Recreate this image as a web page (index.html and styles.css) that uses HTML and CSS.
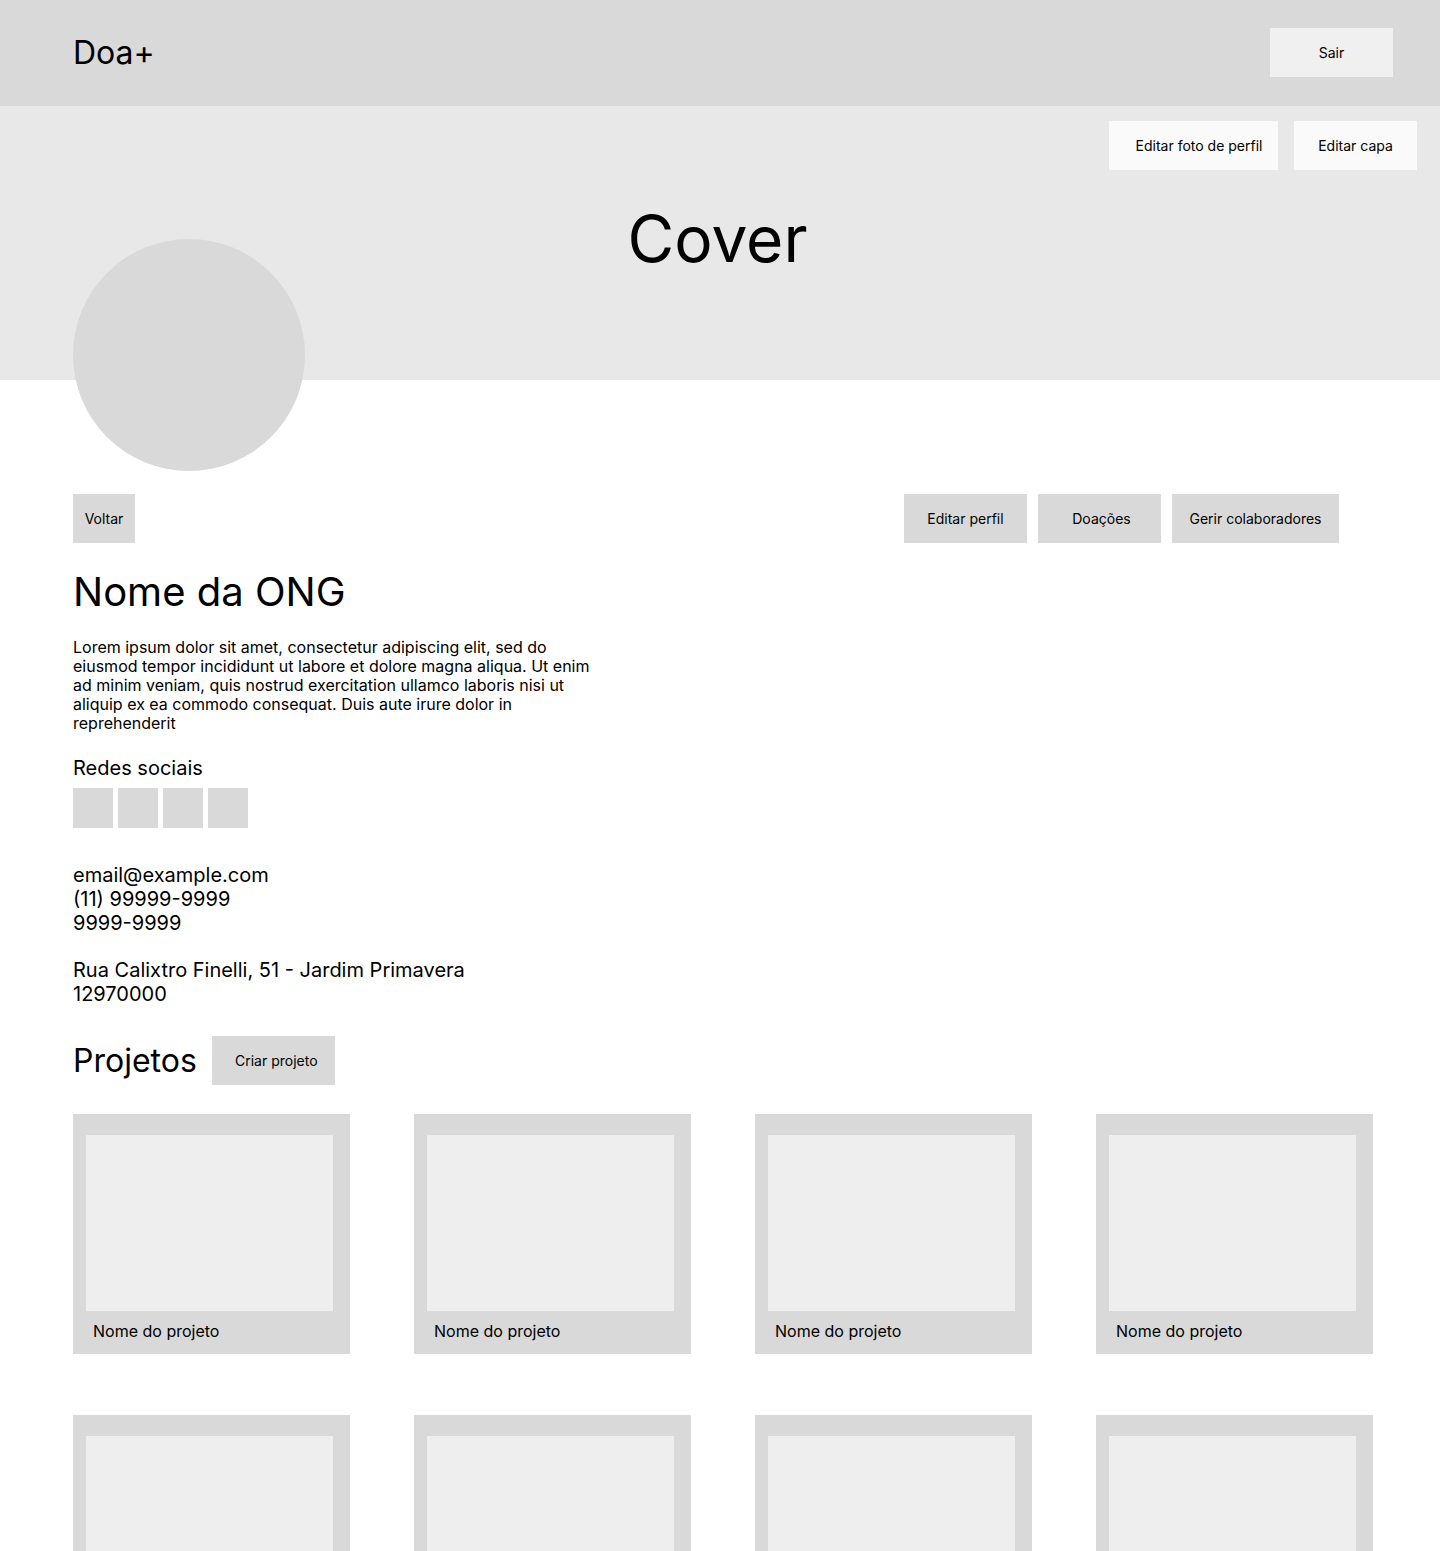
FILE: index.html
```html
<!DOCTYPE html>
<html lang="pt-BR">
<head>
<meta charset="utf-8">
<title>Doa+ — Perfil da ONG</title>
<link rel="stylesheet" href="styles.css">
</head>
<body>
<header class="topbar">
  <div class="logo">Doa+</div>
  <button class="btn btn-light btn-sair">Sair</button>
</header>

<section class="cover">
  <div class="cover-actions">
    <button class="btn btn-white btn-wide">Editar foto de perfil</button>
    <button class="btn btn-white">Editar capa</button>
  </div>
  <div class="cover-title">Cover</div>
</section>

<main class="content">
  <div class="avatar"></div>

  <div class="actions">
    <button class="btn btn-gray btn-small">Voltar</button>
    <div class="actions-right">
      <button class="btn btn-gray">Editar perfil</button>
      <button class="btn btn-gray btn-shift">Doações</button>
      <button class="btn btn-gray btn-wide2">Gerir colaboradores</button>
    </div>
  </div>

  <h1 class="org-name">Nome da ONG</h1>
  <p class="org-desc">Lorem ipsum dolor sit amet, consectetur adipiscing elit, sed do eiusmod tempor incididunt ut labore et dolore magna aliqua. Ut enim ad minim veniam, quis nostrud exercitation ullamco laboris nisi ut aliquip ex ea commodo consequat. Duis aute irure dolor in reprehenderit</p>

  <h2 class="social-title">Redes sociais</h2>
  <div class="social">
    <span class="social-item"></span>
    <span class="social-item"></span>
    <span class="social-item"></span>
    <span class="social-item"></span>
  </div>

  <div class="contact">
    <div>email@example.com</div>
    <div>(11) 99999-9999</div>
    <div>9999-9999</div>
  </div>
  <div class="address">
    <div>Rua Calixtro Finelli, 51 - Jardim Primavera</div>
    <div>12970000</div>
  </div>

  <div class="projects-head">
    <h2 class="projects-title">Projetos</h2>
    <button class="btn btn-gray btn-criar">Criar projeto</button>
  </div>

  <div class="projects">
    <div class="card"><div class="card-img"></div><div class="card-name">Nome do projeto</div></div>
    <div class="card"><div class="card-img"></div><div class="card-name">Nome do projeto</div></div>
    <div class="card"><div class="card-img"></div><div class="card-name">Nome do projeto</div></div>
    <div class="card"><div class="card-img"></div><div class="card-name">Nome do projeto</div></div>
    <div class="card"><div class="card-img"></div><div class="card-name">Nome do projeto</div></div>
    <div class="card"><div class="card-img"></div><div class="card-name">Nome do projeto</div></div>
    <div class="card"><div class="card-img"></div><div class="card-name">Nome do projeto</div></div>
    <div class="card"><div class="card-img"></div><div class="card-name">Nome do projeto</div></div>
  </div>
</main>
</body>
</html>
```

FILE: styles.css
```css
* {
  box-sizing: border-box;
}

body {
  margin: 0;
  font-family: Inter, "Noto Sans", sans-serif;
  color: #000;
  background: #fff;
}

.topbar {
  height: 106px;
  background: #d9d9d9;
  display: flex;
  align-items: center;
  justify-content: space-between;
  padding: 0 47px 0 73px;
}

.logo {
  font-size: 32px;
  line-height: 1.2;
}

.btn {
  font-family: inherit;
  font-size: 14px;
  color: #000;
  border: none;
  height: 49px;
  min-width: 123px;
  padding: 0 16px;
  cursor: pointer;
}

.btn-sair {
  margin-bottom: 1px;
}

.btn-light {
  background: #f0f0f0;
}

.btn-white {
  background: #fafafa;
}

.btn-gray {
  background: #d9d9d9;
}

.btn-wide {
  width: 169px;
  padding: 0 14px 0 25px;
}

.btn-wide2 {
  width: 167px;
}

.btn-shift {
  padding-left: 20px;
}

.btn-criar {
  padding-left: 22px;
}

.btn-small {
  min-width: 0;
  width: 62px;
  padding: 0;
}

.cover {
  height: 274px;
  background: #e8e8e8;
  display: flex;
  flex-direction: column;
  padding: 15px 23px 0;
}

.cover-actions {
  display: flex;
  justify-content: flex-end;
  gap: 16px;
}

.cover-title {
  text-align: center;
  font-size: 64px;
  line-height: 1.21;
  margin: 30px 5px 0 0;
}

.content {
  padding: 0 67px 80px 73px;
}

.avatar {
  width: 232px;
  height: 232px;
  border-radius: 50%;
  background: #d9d9d9;
  margin-top: -141px;
  position: relative;
}

.actions {
  margin-top: 23px;
  margin-right: 34px;
  display: flex;
  justify-content: space-between;
}

.actions-right {
  display: flex;
  gap: 11px;
}

.org-name {
  font-size: 40px;
  font-weight: 400;
  line-height: 1.21;
  margin: 25px 0 0;
}

.org-desc {
  font-size: 16px;
  line-height: 19px;
  width: 530px;
  margin: 22px 0 0;
}

.social-title {
  font-size: 20px;
  font-weight: 400;
  line-height: 24px;
  margin: 23px 0 0;
}

.social {
  display: flex;
  gap: 5px;
  margin-top: 8px;
}

.social-item {
  width: 40px;
  height: 40px;
  background: #d9d9d9;
}

.contact,
.address {
  font-size: 20px;
  line-height: 24px;
}

.contact {
  margin-top: 35px;
}

.address {
  margin-top: 23px;
}

.projects-head {
  display: flex;
  align-items: center;
  gap: 15px;
  margin-top: 30px;
}

.projects-title {
  font-size: 32px;
  font-weight: 400;
  line-height: 1.2;
  margin: 0;
}

.projects {
  margin-top: 29px;
  display: grid;
  grid-template-columns: repeat(4, 277px);
  column-gap: 64px;
  row-gap: 61px;
}

.card {
  height: 240px;
  background: #d9d9d9;
  padding: 21px 17px 0 13px;
}

.card-img {
  height: 176px;
  background: #eeeeee;
}

.card-name {
  font-size: 16px;
  line-height: 19px;
  margin-top: 11px;
  padding-left: 7px;
}
```
